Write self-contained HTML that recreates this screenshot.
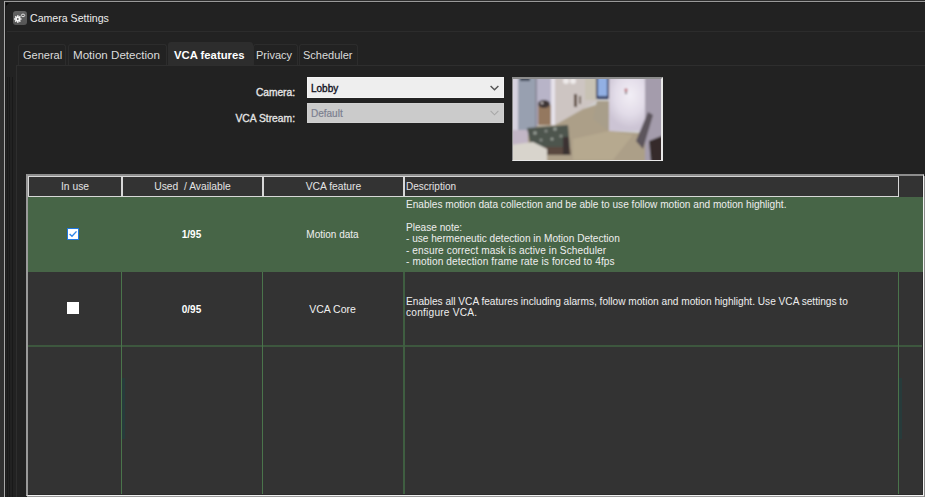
<!DOCTYPE html>
<html><head><meta charset="utf-8">
<style>
*{margin:0;padding:0;box-sizing:border-box}
html,body{width:925px;height:497px;overflow:hidden;background:#222222}
body{position:relative;font-family:"Liberation Sans",sans-serif;color:#e6e6e6}
.a{position:absolute}
.t{position:absolute;white-space:pre;line-height:12px;font-size:10px}
</style></head><body>
<div class="a" style="left:0;top:0;width:4px;height:497px;background:#303030"></div>
<div class="a" style="left:0;top:0;width:925px;height:1px;background:#2e2e2e"></div>
<div class="a" style="left:4px;top:1px;width:921px;height:1px;background:#9a9a9a"></div>
<div class="a" style="left:4px;top:1px;width:1px;height:496px;background:#a8a8a8"></div>
<div class="a" style="left:5px;top:2px;width:920px;height:1px;background:#1c1c1c"></div>
<div class="a" style="left:5px;top:2px;width:1px;height:495px;background:#1c1c1c"></div>
<div class="a" style="left:6px;top:3px;width:0;height:0;border-top:3px solid #080808;border-right:3px solid transparent"></div>
<div class="a" style="left:13px;top:11px;width:14px;height:14px;border-radius:3px;background:linear-gradient(#626262,#555555);overflow:hidden"><svg width="14" height="14" viewBox="0 0 14 14" style="position:absolute;left:0;top:0">
<g fill="#f4f4f4"><circle cx="4.8" cy="8" r="2.4"/>
<g stroke="#f4f4f4" stroke-width="1.5"><path d="M4.8 4.3V11.7M1.1 8H8.5M2.2 5.4L7.4 10.6M7.4 5.4L2.2 10.6"/></g></g>
<circle cx="4.8" cy="8" r="0.9" fill="#5a5a5a"/>
<ellipse cx="10" cy="4.4" rx="1.7" ry="1.3" fill="none" stroke="#eeeeee" stroke-width="0.9"/>
</svg></div>
<div class="t" style="left:30px;top:12px;font-size:10.6px;color:#ececec">Camera Settings</div>
<div class="a" style="left:7px;top:31px;width:918px;height:1px;background:#2c2c2c"></div>
<div class="a" style="left:18px;top:44px;width:48px;height:21px;background:#222;border:1px solid #2c2c2c;border-bottom:none;border-radius:3px 3px 0 0"></div>
<div class="t" style="left:23px;top:49px;font-size:11px;color:#dcdcdc">General</div>
<div class="a" style="left:68px;top:44px;width:99px;height:21px;background:#222;border:1px solid #2c2c2c;border-bottom:none;border-radius:3px 3px 0 0"></div>
<div class="t" style="left:73px;top:49px;font-size:11.6px;color:#dcdcdc">Motion Detection</div>
<div class="a" style="left:168px;top:42px;width:85px;height:23px;background:#2d2d2d;border-radius:3px 3px 0 0"></div>
<div class="t" style="left:174px;top:49px;font-size:11.3px;font-weight:bold;color:#ffffff">VCA features</div>
<div class="a" style="left:253px;top:44px;width:45px;height:21px;background:#222;border:1px solid #2c2c2c;border-bottom:none;border-radius:3px 3px 0 0"></div>
<div class="t" style="left:256px;top:49px;font-size:11px;color:#dcdcdc">Privacy</div>
<div class="a" style="left:299px;top:44px;width:59px;height:21px;background:#222;border:1px solid #2c2c2c;border-bottom:none;border-radius:3px 3px 0 0"></div>
<div class="t" style="left:303px;top:49px;font-size:11px;color:#dcdcdc">Scheduler</div>
<div class="a" style="left:16px;top:65px;width:909px;height:1px;background:#2e2e2e"></div>
<div class="a" style="left:16px;top:65px;width:1px;height:432px;background:#2e2e2e"></div>
<div class="a" style="left:7px;top:77px;width:1px;height:420px;background:#191919"></div>
<div class="a" style="left:9px;top:77px;width:1px;height:420px;background:#191919"></div>
<div class="a" style="left:12px;top:77px;width:1px;height:420px;background:#191919"></div>
<div class="t" style="left:195px;top:87px;width:100px;text-align:right;font-size:10.2px;-webkit-text-stroke:0.35px #e6e6e6">Camera:</div>
<div class="t" style="left:195px;top:113px;width:100px;text-align:right;font-size:10.3px;-webkit-text-stroke:0.3px #e6e6e6">VCA Stream:</div>
<div class="a" style="left:307px;top:77px;width:197px;height:21px;background:#eeeeee;border:1px solid #f4f4f4"></div>
<div class="t" style="left:311px;top:83px;color:#101020;-webkit-text-stroke:0.35px #101020">Lobby</div>
<div class="a" style="left:307px;top:103px;width:197px;height:20px;background:#cbcbcb;border:1px solid #d0d0d0"></div>
<div class="t" style="left:311px;top:108px;color:#7c8090;-webkit-text-stroke:0.2px #7c8090">Default</div>
<div class="a" style="left:490px;top:85px;width:9px;height:6px"><svg width="9" height="6" viewBox="0 0 9 6" style="display:block"><path d="M0.6 0.9 L4.5 4.8 L8.4 0.9" fill="none" stroke="#555" stroke-width="1.4"/></svg></div>
<div class="a" style="left:490px;top:110px;width:9px;height:6px"><svg width="9" height="6" viewBox="0 0 9 6" style="display:block"><path d="M0.6 0.9 L4.5 4.8 L8.4 0.9" fill="none" stroke="#a8a8a8" stroke-width="1.1"/></svg></div>
<div class="a" style="left:512px;top:77px;width:151px;height:84px;border-top:2px solid #8c8c8c;border-left:1px solid #8c8c8c;border-right:2px solid #e8e8e8;border-bottom:1px solid #e8e8e8;background:#d0d0d0;overflow:hidden"><svg width="148" height="81" viewBox="0 0 148 81" style="display:block">
<defs><filter id="bl" x="-5%" y="-5%" width="110%" height="110%"><feGaussianBlur stdDeviation="0.8"/></filter>
<radialGradient id="rg" cx="0.5" cy="0.35" r="0.6"><stop offset="0" stop-color="#f2eef6"/><stop offset="0.6" stop-color="#e2dce8"/><stop offset="1" stop-color="#ccc4d4"/></radialGradient></defs>
<g filter="url(#bl)">
<rectx="-3"y="-3"width="154"height="87"fill="#aea28c"/>
<rect x="-3" y="-3" width="8" height="78" fill="#d6d2de"/>
<rect x="5" y="-3" width="17" height="54" fill="#98a0b0"/>
<rect x="7" y="-3" width="10" height="5" fill="#3e4658"/>
<rect x="22" y="-3" width="2" height="53" fill="#8a8a9a"/>
<rect x="24" y="-3" width="14" height="49" fill="#b8b4c8"/>
<rect x="25" y="26" width="13" height="20" fill="#94785e"/>
<ellipse cx="31" cy="25" rx="6" ry="4" fill="#3e3636"/>
<circle cx="29" cy="24" r="1.2" fill="#c8c0c0"/>
<rect x="38" y="-3" width="4" height="49" fill="#e6e2ea"/>
<polygon points="42,-3 84,-3 84,22 70,30 42,46" fill="#cdc5c2"/>
<ellipse cx="53" cy="2" rx="3" ry="3" fill="#eeeaea"/>
<ellipse cx="60" cy="2" rx="3" ry="3" fill="#eeeaea"/>
<rect x="61" y="15" width="3" height="13" fill="#5e4c3e"/>
<rect x="66" y="17" width="2" height="8" fill="#6e5e50"/>
<rect x="72" y="-3" width="12" height="24" fill="#c8c2b4"/>
<rect x="83" y="-3" width="13" height="23" fill="#3a4468"/>
<rect x="85" y="-3" width="9" height="20" fill="#92b0e4"/>
<rect x="96" y="-3" width="42" height="55" fill="url(#rg)"/>
<circle cx="113" cy="11" r="1.5" fill="#b05058"/>
<circle cx="113" cy="14" r="1" fill="#404040"/>
<polygon points="-3,75 24,47 42,46 70,30 96,22 96,52 137,55 151,60 151,84 -3,84" fill="#ac9f88"/>
<polygon points="60,60 96,52 120,56 100,81 60,81" fill="#b6a98f"/>
<polygon points="84,22 96,22 96,52 80,40" fill="#a89e8a"/>
<polygon points="132,-3 151,-3 151,84 132,84" fill="#a49cac"/>
<polygon points="123,62 135,33 140,36 130,70" fill="#5c545c"/>
<polygon points="136,62 151,56 151,84 138,84" fill="#342c2c"/>
<rect x="-3" y="51" width="18" height="15" fill="#c2b6c6"/>
<polygon points="14,49 55,46 57,68 18,68" fill="#4e554e"/>
<circle cx="22" cy="54" r="1.8" fill="#9aa098"/><circle cx="33" cy="52" r="1.5" fill="#8a9088"/><circle cx="42" cy="50" r="1.8" fill="#9aa098"/><circle cx="48" cy="57" r="1.6" fill="#8a9088"/><circle cx="28" cy="61" r="1.5" fill="#8a9088"/><circle cx="39" cy="60" r="1.5" fill="#9aa098"/>
<polygon points="25,68 57,68 58,76 30,76" fill="#5a4a40"/>
<rect x="50" y="58" width="6" height="18" fill="#3a3030"/>
<polygon points="-3,66 20,63 34,70 34,84 -3,84" fill="#d8d4cc"/>
</g></svg></div>
<div class="a" style="left:26px;top:174px;width:898px;height:322px;background:#333333;border-top:2px solid #8e8e8e;border-left:2px solid #9a9a9a;border-right:1px solid #f2f2f2;border-bottom:1px solid #f2f2f2"></div>
<div class="a" style="left:27px;top:496px;width:898px;height:1px;background:#9a9a9a"></div>
<div class="a" style="left:924px;top:176px;width:1px;height:321px;background:#8a8a8a"></div>
<div class="a" style="left:922px;top:176px;width:1px;height:319px;background:#2a2a2a"></div>
<div class="a" style="left:28px;top:494px;width:894px;height:1px;background:#2a2a2a"></div>
<div class="a" style="left:28px;top:176px;width:94px;height:21px;background:#333;border:1px solid #d8d8d8"></div>
<div class="a" style="left:122px;top:176px;width:141px;height:21px;background:#333;border:1px solid #d8d8d8"></div>
<div class="a" style="left:263px;top:176px;width:141px;height:21px;background:#333;border:1px solid #d8d8d8"></div>
<div class="a" style="left:404px;top:176px;width:495px;height:21px;background:#333;border:1px solid #d8d8d8"></div>
<div class="t" style="left:28px;top:181px;width:94px;text-align:center;color:#e4e4e4;font-size:10.3px">In use</div>
<div class="t" style="left:122px;top:181px;width:141px;text-align:center;color:#e4e4e4;font-size:10.3px">Used  / Available</div>
<div class="t" style="left:263px;top:181px;width:141px;text-align:center;color:#e4e4e4;font-size:10.3px">VCA feature</div>
<div class="t" style="left:406px;top:181px;color:#e4e4e4">Description</div>
<div class="a" style="left:28px;top:197px;width:895px;height:75px;background:#476547"></div>
<div class="a" style="left:28px;top:345px;width:894px;height:2px;background:#3d573e"></div>
<div class="a" style="left:121px;top:272px;width:1px;height:222px;background:#4a744b"></div>
<div class="a" style="left:262px;top:272px;width:1px;height:222px;background:#4a744b"></div>
<div class="a" style="left:898px;top:272px;width:1px;height:222px;background:#4a744b"></div>
<div class="a" style="left:403px;top:272px;width:2px;height:222px;background:#3f5e41"></div>
<div class="a" style="left:122px;top:378px;width:3px;height:61px;background:#273b3b"></div>
<div class="a" style="left:899px;top:378px;width:3px;height:61px;background:#273b3b"></div>
<div class="a" style="left:67px;top:228px;width:12px;height:12px"><svg width="12" height="12" viewBox="0 0 12 12" style="display:block"><rect x="0.5" y="0.5" width="11" height="11" fill="#fff" stroke="#1f78e0" stroke-width="1"/><path d="M2.6 6 L5 8.3 L9.5 3.4" fill="none" stroke="#2f86e8" stroke-width="1.4"/></svg></div>
<div class="a" style="left:67px;top:302px;width:12px;height:12px;background:#fff"></div>
<div class="t" style="left:121px;top:229px;width:141px;text-align:center;font-weight:bold;color:#fff">1/95</div>
<div class="t" style="left:262px;top:229px;width:141px;text-align:center;color:#f0f0f0">Motion data</div>
<div class="t" style="left:121px;top:304px;width:141px;text-align:center;font-weight:bold;color:#fff">0/95</div>
<div class="t" style="left:262px;top:303px;width:141px;text-align:center;color:#f0f0f0;font-size:10.5px">VCA Core</div>
<div class="t" style="left:406px;top:199px;color:#eeeeee;font-size:10.1px;letter-spacing:0px">Enables motion data collection and be able to use follow motion and motion highlight.</div>
<div class="t" style="left:406px;top:210px;color:#eeeeee;font-size:10.1px;letter-spacing:0px"></div>
<div class="t" style="left:406px;top:222px;color:#eeeeee;font-size:10.1px;letter-spacing:0px">Please note:</div>
<div class="t" style="left:406px;top:233px;color:#eeeeee;font-size:10.1px;letter-spacing:0px">- use hermeneutic detection in Motion Detection</div>
<div class="t" style="left:406px;top:245px;color:#eeeeee;font-size:10.1px;letter-spacing:0.1px">- ensure correct mask is active in Scheduler</div>
<div class="t" style="left:406px;top:256px;color:#eeeeee;font-size:10.1px;letter-spacing:0.12px">- motion detection frame rate is forced to 4fps</div>
<div class="t" style="left:406px;top:296px;color:#eeeeee;font-size:10.15px;letter-spacing:0px">Enables all VCA features including alarms, follow motion and motion highlight. Use VCA settings to</div>
<div class="t" style="left:406px;top:307px;color:#eeeeee;font-size:10.15px;letter-spacing:0.23px">configure VCA.</div>
</body></html>
